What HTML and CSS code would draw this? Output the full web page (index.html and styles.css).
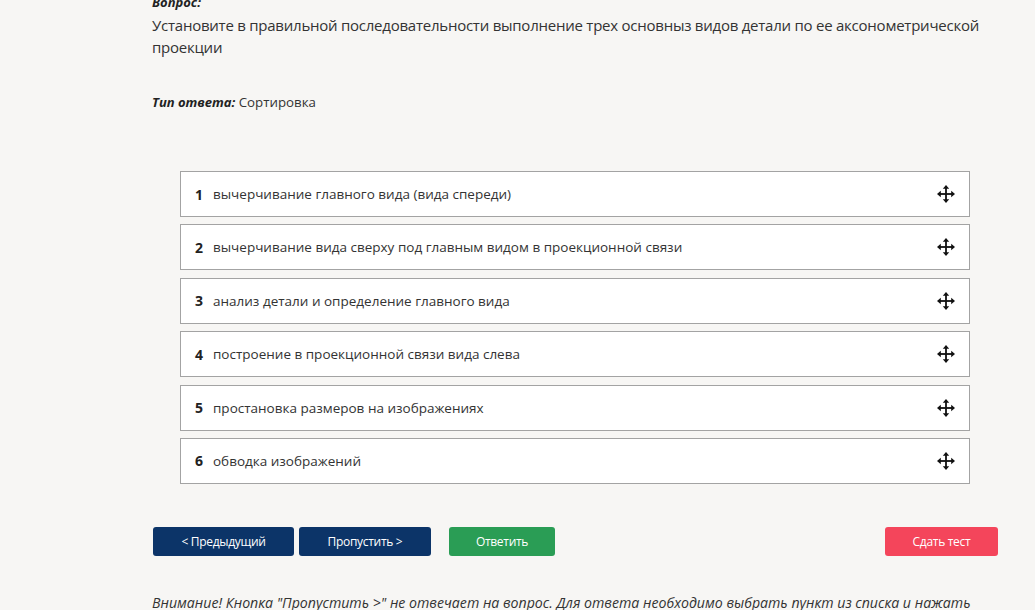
FILE: index.html
```html
<!DOCTYPE html>
<html lang="ru">
<head>
  <meta charset="utf-8">
  <title>Тест</title>
  <link rel="stylesheet" href="styles.css">
</head>
<body>
<div class="page">
  <div class="label">Вопрос:</div>
  <div class="question">Установите в правильной последовательности выполнение трех основныз видов детали по ее аксонометрической проекции</div>
  <div class="type"><span class="label">Тип ответа:</span> Сортировка</div>

  <ul class="sortlist">
    <li class="item"><b>1</b><span class="txt">вычерчивание главного вида (вида спереди)</span><svg class="move" viewBox="0 0 18 18"><use href="#arrows"/></svg></li>
    <li class="item"><b>2</b><span class="txt">вычерчивание вида сверху под главным видом в проекционной связи</span><svg class="move" viewBox="0 0 18 18"><use href="#arrows"/></svg></li>
    <li class="item"><b>3</b><span class="txt">анализ детали и определение главного вида</span><svg class="move" viewBox="0 0 18 18"><use href="#arrows"/></svg></li>
    <li class="item"><b>4</b><span class="txt">построение в проекционной связи вида слева</span><svg class="move" viewBox="0 0 18 18"><use href="#arrows"/></svg></li>
    <li class="item"><b>5</b><span class="txt">простановка размеров на изображениях</span><svg class="move" viewBox="0 0 18 18"><use href="#arrows"/></svg></li>
    <li class="item"><b>6</b><span class="txt">обводка изображений</span><svg class="move" viewBox="0 0 18 18"><use href="#arrows"/></svg></li>
  </ul>

  <div class="buttons">
    <div class="btn navy prev">&lt; Предыдущий</div>
    <div class="btn navy skip">Пропустить &gt;</div>
    <div class="btn green answer">Ответить</div>
    <div class="btn red submit">Сдать тест</div>
  </div>

  <div class="note">Внимание! Кнопка "Пропустить &gt;" не отвечает на вопрос. Для ответа необходимо выбрать пункт из списка и нажать "Ответить".</div>
</div>

<svg width="0" height="0" style="position:absolute">
  <defs>
    <g id="arrows" fill="#111">
      <rect x="8.1" y="2.5" width="1.8" height="13"/>
      <rect x="2.5" y="8.1" width="13" height="1.8"/>
      <path d="M9 0 L12.2 3.8 L5.8 3.8 Z"/>
      <path d="M9 18 L12.2 14.2 L5.8 14.2 Z"/>
      <path d="M0 9 L3.8 5.8 L3.8 12.2 Z"/>
      <path d="M18 9 L14.2 5.8 L14.2 12.2 Z"/>
    </g>
  </defs>
</svg>
</body>
</html>
```

FILE: styles.css
```css
body {margin:0;background-color:#f7f6f4;font-family:"Open Sans","Noto Sans",sans-serif;color:#333;overflow:hidden;}
.page {width:846px;margin-left:152px;margin-top:-7px;}
.label {font-size:13px;line-height:18px;font-weight:bold;font-style:italic;color:#222;}
.question {font-size:15px;line-height:22px;margin-top:3px;color:#333;letter-spacing:-0.24px;}
.type {font-size:13.3px;line-height:18px;margin-top:35px;}
.type .label {display:inline;font-size:13px;}

.sortlist {list-style:none;margin:60px 28px 0 28px;padding:0;display:flex;flex-direction:column;gap:7.4px;}
.item {height:46px;box-sizing:border-box;border:1px solid #a3a3a3;background-color:#fff;display:flex;align-items:center;padding:0 14px 0 14px;font-size:13.5px;}
.item b {font-size:14px;color:#222;width:18px;}
.item .txt {flex:1;color:#333;}
.move {width:18px;height:18px;}

.buttons {display:flex;margin-top:43px;align-items:center;}
.btn {height:29px;line-height:29px;border-radius:3px;color:#fff;font-size:12px;letter-spacing:-0.3px;text-align:center;cursor:pointer;}
.navy {background-color:#0c3468;}
.green {background-color:#2a9d55;}
.red {background-color:#f4455b;}
.prev {width:141px;margin-left:1px;}
.skip {width:132px;margin-left:5px;}
.answer {width:106px;margin-left:18px;}
.submit {width:113px;margin-left:auto;}

.note {margin-top:38px;font-size:14.15px;line-height:18px;font-style:italic;color:#333;}
```
